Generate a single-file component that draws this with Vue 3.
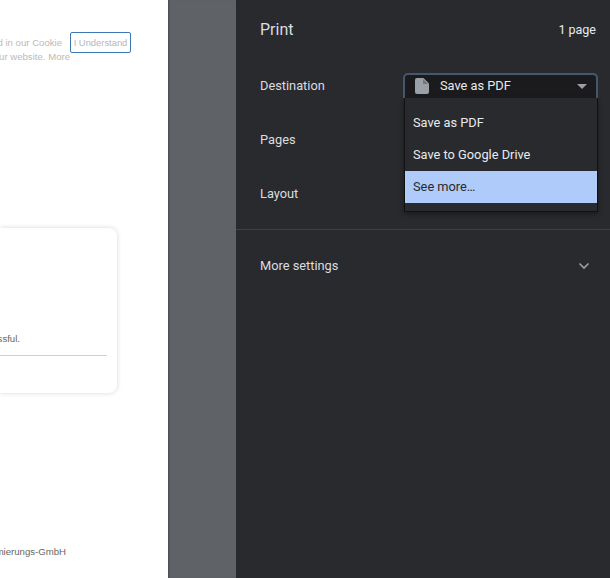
<template>
  <div class="screen">
    <div class="page">
      <div class="cookie">
        <div class="cookie-text">
          <p>d in our Cookie</p>
          <p>ur website. More</p>
        </div>
        <button class="understand">I Understand</button>
      </div>
      <div class="card">
        <p class="card-msg">ssful.</p>
        <div class="card-line"></div>
      </div>
      <p class="footer-text">mierungs-GmbH</p>
    </div>

    <div class="preview"></div>

    <div class="sidebar">
      <div class="header">
        <h1>Print</h1>
        <span class="page-count">1 page</span>
      </div>

      <div class="settings">
        <div class="row">
          <span class="label">Destination</span>
          <div class="select-wrap">
            <div class="select">
              <svg class="file-icon" width="14" height="16" viewBox="0 0 14 16">
                <path d="M2 0h6.5L14 5.5V14a2 2 0 0 1-2 2H2a2 2 0 0 1-2-2V2a2 2 0 0 1 2-2z" fill="#9aa0a6" />
                <path d="M8 1v5h5z" fill="#292a2e" opacity="0.35" />
              </svg>
              <span>Save as PDF</span>
              <i class="caret"></i>
            </div>
            <ul class="menu">
              <li v-for="opt in options" :key="opt" :class="{ active: opt === active }">{{ opt }}</li>
            </ul>
          </div>
        </div>
        <div class="row"><span class="label">Pages</span></div>
        <div class="row"><span class="label">Layout</span></div>
      </div>

      <div class="more">
        <span class="label">More settings</span>
        <svg width="12" height="8" viewBox="0 0 12 8">
          <path d="M1.5 1.5 6 6l4.5-4.5" fill="none" stroke="#9aa0a6" stroke-width="1.6" />
        </svg>
      </div>
    </div>
  </div>
</template>

<script setup>
const options = ['Save as PDF', 'Save to Google Drive', 'See more…']
const active = 'See more…'
</script>

<style>
html,
body {
  margin: 0;
  background: #292a2e;
}
</style>

<style scoped>
.screen {
  display: flex;
  width: 610px;
  height: 578px;
  overflow: hidden;
}

.page {
  width: 168px;
  flex: none;
  background: #fff;
  overflow: hidden;
  font-family: "Liberation Sans", Arial, sans-serif;
  font-size: 9.6px;
  padding-top: 32px;
  box-sizing: border-box;
}

.cookie {
  display: flex;
  justify-content: flex-end;
  width: 131px;
}

.cookie-text {
  flex: none;
  width: 70px;
  padding-top: 4px;
  color: #bdbab5;
  white-space: nowrap;
  display: flex;
  flex-direction: column;
  align-items: flex-end;
}

.cookie-text p {
  margin: 0;
  line-height: 14px;
}

.cookie-text p:first-child {
  padding-right: 8px;
}

.understand {
  flex: none;
  width: 61px;
  height: 21px;
  padding: 0;
  border: 1px solid #3b78b5;
  border-radius: 2px;
  background: #fff;
  color: #b4b6ba;
  font: inherit;
  font-size: 9.4px;
  white-space: nowrap;
}

.card {
  width: 117px;
  height: 165px;
  margin-top: 164px;
  box-sizing: border-box;
  padding: 105px 10px 0 0;
  background: #fff;
  border-radius: 0 8px 8px 0;
  box-shadow: 0 0 5px rgba(0, 0, 0, 0.16);
}

.card-msg {
  display: flex;
  justify-content: flex-end;
  width: 20px;
  margin: 0;
  line-height: 12px;
  color: #666;
  white-space: nowrap;
}

.card-line {
  height: 1px;
  margin-top: 10px;
  background: #cfcfcf;
}

.footer-text {
  display: flex;
  justify-content: flex-end;
  margin: 153px 0 0;
  width: 66px;
  line-height: 12px;
  color: #666;
  white-space: nowrap;
}

.preview {
  width: 68px;
  flex: none;
  background: #5f6266;
  box-shadow: inset 2px 0 2px -1px rgba(0, 0, 0, 0.25);
}

.sidebar {
  flex: 1;
  background: #292a2e;
  color: #e8eaed;
  font-family: Roboto, "Liberation Sans", sans-serif;
  font-size: 12.8px;
}

.header {
  display: flex;
  justify-content: space-between;
  align-items: center;
  height: 59px;
  padding: 0 14px 0 24px;
}

.header h1 {
  margin: 0;
  font-size: 16px;
  font-weight: 400;
  color: #dadce0;
}

.page-count {
  font-size: 12.5px;
}

.settings {
  height: 171px;
  border-bottom: 1px solid #3f4044;
  box-sizing: border-box;
}

.row {
  display: flex;
  justify-content: space-between;
  align-items: flex-start;
  height: 54px;
  padding: 0 12px 0 24px;
}

.label {
  margin-top: 19px;
  line-height: 15px;
  color: #dadce0;
}

.more .label {
  margin: 0;
}

.select-wrap {
  position: relative;
  margin-top: 14px;
}

.select {
  display: flex;
  align-items: center;
  gap: 11px;
  width: 195px;
  height: 25px;
  box-sizing: border-box;
  padding: 0 9px 2px 10px;
  border: 2px solid #45576f;
  border-bottom-width: 0;
  border-radius: 5px 5px 0 0;
  background: #1b1b1e;
}

.file-icon {
  flex: none;
  margin-top: 1px;
}

.caret {
  margin-left: auto;
  margin-top: 1px;
  border-left: 5px solid transparent;
  border-right: 5px solid transparent;
  border-top: 5px solid #9aa0a6;
}

.menu {
  position: absolute;
  top: 25px;
  left: 1px;
  width: 194px;
  box-sizing: border-box;
  margin: 0;
  padding: 9px 0 8px;
  list-style: none;
  background: #292a2e;
  border: 1px solid #111;
  border-top: 0;
  box-shadow: 0 2px 5px rgba(0, 0, 0, 0.4);
}

.menu li {
  height: 32px;
  line-height: 32px;
  padding: 0 8px;
  color: #e8eaed;
}

.menu li.active {
  background: #aecbfa;
  color: #292a2e;
}

.more {
  display: flex;
  justify-content: space-between;
  align-items: center;
  height: 71px;
  padding: 0 20px 0 24px;
}
</style>
